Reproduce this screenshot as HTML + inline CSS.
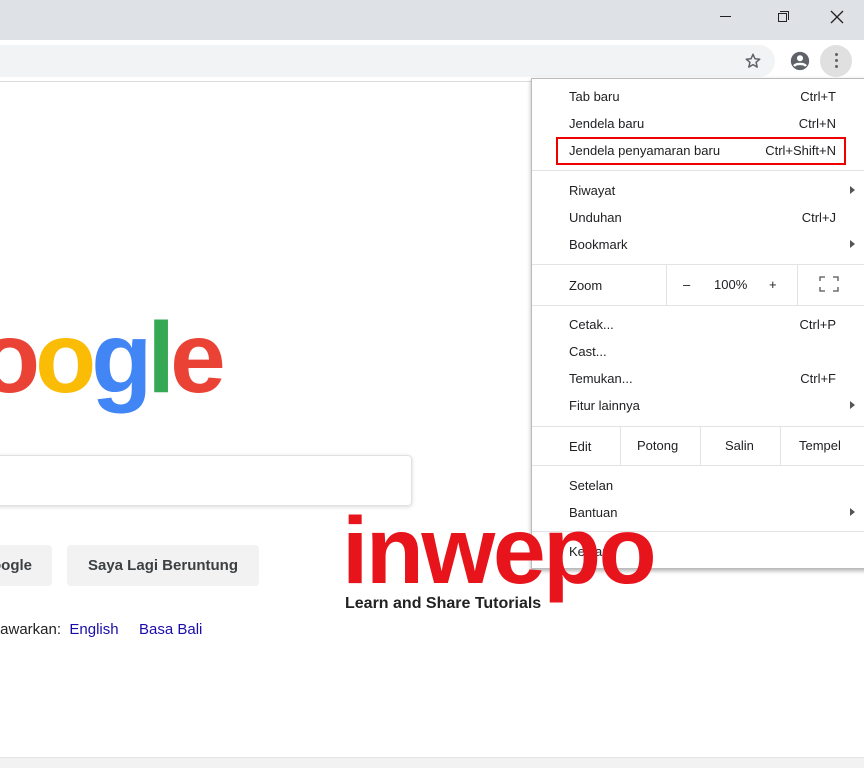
<!DOCTYPE html>
<html><head><meta charset="utf-8"><style>
*{margin:0;padding:0;box-sizing:border-box}
body{width:864px;height:768px;overflow:hidden;position:relative;background:#fff;font-family:"Liberation Sans",Arial,sans-serif;color:#202124}
.a{position:absolute}
.mi{position:absolute;left:569px;font-size:13px;color:#202124;line-height:16px}
.sc{position:absolute;right:28px;font-size:13px;line-height:16px}
.sep{position:absolute;left:532px;right:0;height:1px;background:#e3e3e3}
.arr{position:absolute;right:9px;width:0;height:0;border-top:4px solid transparent;border-bottom:4px solid transparent;border-left:5px solid #555}
</style></head><body>
<div class="a" style="left:0;top:0;width:864px;height:40px;background:#dee1e6"></div>
<div class="a" style="left:720px;top:16px;width:11px;height:1px;background:#222"></div>
<div class="a" style="left:778px;top:13px;width:9px;height:9px;border:1px solid #222"></div>
<div class="a" style="left:780px;top:11px;width:9px;height:9px;border-top:1px solid #222;border-right:1px solid #222"></div>
<svg class="a" style="left:829px;top:9px" width="16" height="16"><path d="M2 2L14 14M14 2L2 14" stroke="#222" stroke-width="1.3"/></svg>
<div class="a" style="left:0;top:40px;width:864px;height:42px;background:#fff;border-bottom:1px solid #ddd"></div>
<div class="a" style="left:-20px;top:45px;width:795px;height:32px;background:#f1f3f4;border-radius:16px"></div>
<svg class="a" style="left:744px;top:52px" width="18" height="18" viewBox="0 0 24 24"><path d="M12 3l2.6 6 6.4.6-4.9 4.2 1.5 6.3L12 16.8 6.4 20.1l1.5-6.3L3 9.6l6.4-.6z" fill="none" stroke="#5f6368" stroke-width="2" stroke-linejoin="round"/></svg>
<svg class="a" style="left:789px;top:50px" width="22" height="22" viewBox="0 0 24 24"><circle cx="12" cy="12" r="10" fill="#5f6368"/><circle cx="12" cy="9" r="3.3" fill="#fff"/><path d="M5.5 17.5c2-3 11-3 13 0" stroke="#fff" stroke-width="2.6" fill="none"/></svg>
<div class="a" style="left:820px;top:45px;width:32px;height:32px;border-radius:16px;background:#e0e0e0"></div>
<div class="a" style="left:835px;top:53px;width:3px;height:3px;background:#5f6368;border-radius:2px;box-shadow:0 6px 0 #5f6368,0 12px 0 #5f6368"></div>

<div class="a" style="left:-21px;top:308px;font-size:100px;line-height:1;letter-spacing:-5px;font-weight:bold;font-family:'Liberation Sans',sans-serif;white-space:nowrap"><span style="color:#ea4335">o</span><span style="color:#fbbc05">o</span><span style="color:#4285f4">g</span><span style="color:#34a853">l</span><span style="color:#ea4335">e</span></div>
<div class="a" style="left:-20px;top:455px;width:432px;height:51px;border:1px solid #dfe1e5;border-radius:4px;box-shadow:0 1px 4px rgba(0,0,0,.15)"></div>
<div class="a" style="left:-40px;top:545px;width:92px;height:41px;background:#f2f2f2;border-radius:4px;font-size:15px;color:#3c4043;line-height:41px;text-align:right;padding-right:20px;font-weight:bold">Google</div>
<div class="a" style="left:67px;top:545px;width:192px;height:41px;background:#f2f2f2;border-radius:4px;font-size:15px;color:#3c4043;line-height:41px;text-align:center;font-weight:bold">Saya Lagi Beruntung</div>
<div class="a" style="left:-4px;top:621px;font-size:15px;color:#222;white-space:nowrap">tawarkan:&nbsp; <span style="color:#1a0dab">English</span></div>
<div class="a" style="left:139px;top:621px;font-size:15px;color:#1a0dab;white-space:nowrap">Basa Bali</div>
<div class="a" style="left:0;top:757px;width:864px;height:11px;background:#f2f2f2;border-top:1px solid #e4e4e4"></div>

<div class="a" style="left:531px;top:78px;width:340px;height:491px;background:#fff;border:1px solid #bbb;box-shadow:0 2px 4px rgba(0,0,0,.3)"></div>
<div class="mi" style="top:89px">Tab baru</div><div class="sc" style="top:89px">Ctrl+T</div>
<div class="mi" style="top:116px">Jendela baru</div><div class="sc" style="top:116px">Ctrl+N</div>
<div class="mi" style="top:143px">Jendela penyamaran baru</div><div class="sc" style="top:143px">Ctrl+Shift+N</div>
<div class="a" style="left:556px;top:137px;width:290px;height:28px;border:2px solid #e00"></div>
<div class="sep" style="top:170px"></div>
<div class="mi" style="top:183px">Riwayat</div><div class="arr" style="top:186px"></div>
<div class="mi" style="top:210px">Unduhan</div><div class="sc" style="top:210px">Ctrl+J</div>
<div class="mi" style="top:237px">Bookmark</div><div class="arr" style="top:240px"></div>
<div class="sep" style="top:264px"></div>
<div class="mi" style="top:278px">Zoom</div>
<div class="a" style="left:666px;top:265px;width:1px;height:40px;background:#e3e3e3"></div>
<div class="a" style="left:797px;top:265px;width:1px;height:40px;background:#e3e3e3"></div>
<div class="a" style="left:683px;top:277px;font-size:13px">–</div>
<div class="a" style="left:714px;top:277px;font-size:13px">100%</div>
<div class="a" style="left:769px;top:277px;font-size:13px">+</div>
<svg class="a" style="left:819px;top:276px" width="20" height="16"><path d="M1 5V1h5M14 1h5v4M19 11v4h-5M6 15H1v-4" fill="none" stroke="#555" stroke-width="1.3"/></svg>
<div class="sep" style="top:305px"></div>
<div class="mi" style="top:317px">Cetak...</div><div class="sc" style="top:317px">Ctrl+P</div>
<div class="mi" style="top:344px">Cast...</div>
<div class="mi" style="top:371px">Temukan...</div><div class="sc" style="top:371px">Ctrl+F</div>
<div class="mi" style="top:398px">Fitur lainnya</div><div class="arr" style="top:401px"></div>
<div class="sep" style="top:426px"></div>
<div class="mi" style="top:439px">Edit</div>
<div class="a" style="left:620px;top:426px;width:1px;height:39px;background:#e3e3e3"></div>
<div class="a" style="left:700px;top:426px;width:1px;height:39px;background:#e3e3e3"></div>
<div class="a" style="left:780px;top:426px;width:1px;height:39px;background:#e3e3e3"></div>
<div class="a" style="left:637px;top:438px;font-size:13px">Potong</div>
<div class="a" style="left:725px;top:438px;font-size:13px">Salin</div>
<div class="a" style="left:799px;top:438px;font-size:13px">Tempel</div>
<div class="sep" style="top:465px"></div>
<div class="mi" style="top:478px">Setelan</div>
<div class="mi" style="top:505px">Bantuan</div><div class="arr" style="top:508px"></div>
<div class="sep" style="top:531px"></div>
<div class="mi" style="top:544px">Keluar</div>

<div class="a" style="left:342px;top:504px;font-size:95px;font-weight:bold;color:#e8141c;letter-spacing:-2.5px;line-height:1;font-family:'Liberation Sans',sans-serif;white-space:nowrap">inwepo</div>
<div class="a" style="left:345px;top:595px;font-size:16px;font-weight:bold;color:#222;white-space:nowrap">Learn and Share Tutorials</div>
</body></html>
